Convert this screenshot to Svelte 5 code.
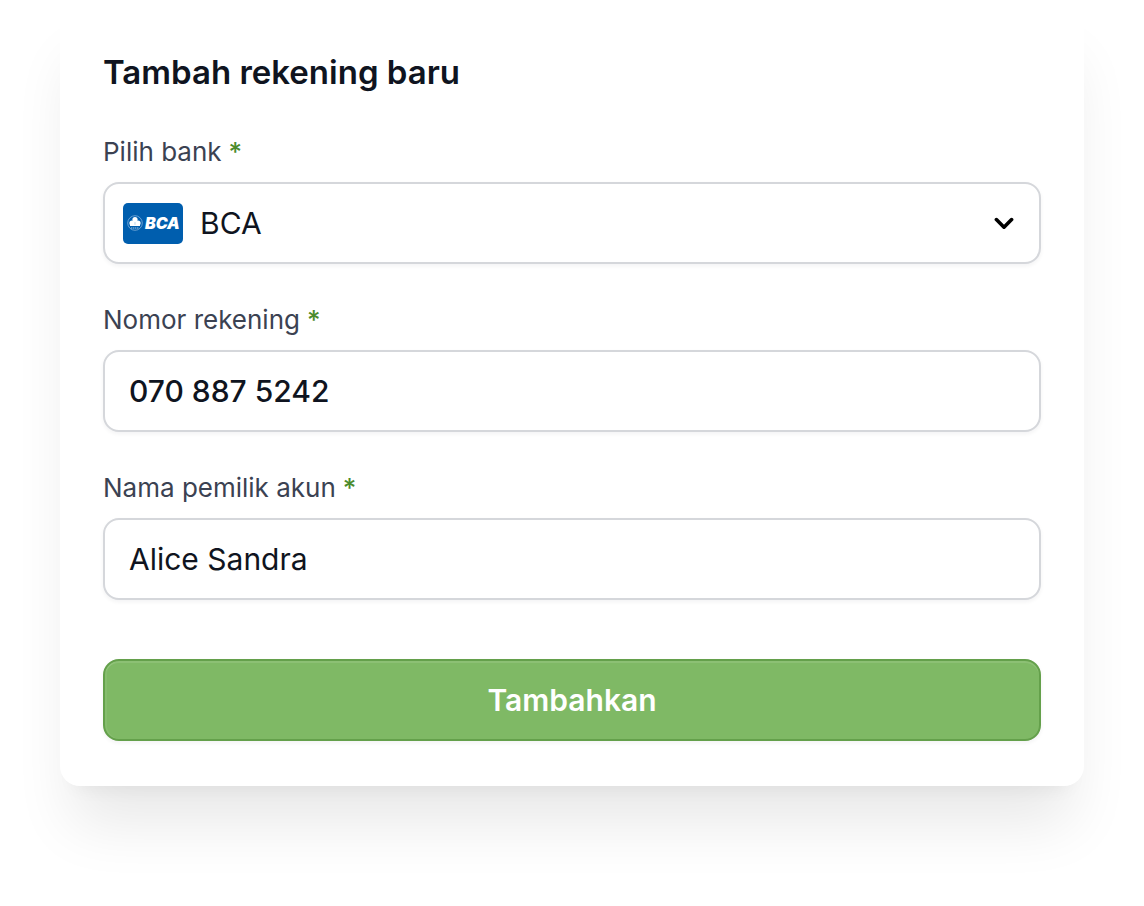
<script lang="ts">
	const banks = ['BCA', 'BNI', 'BRI', 'Mandiri'];

	let bank = $state('BCA');
	let accountNumber = $state('070 887 5242');
	let accountName = $state('Alice Sandra');

	function handleSubmit(event: SubmitEvent) {
		event.preventDefault();
	}
</script>

<main class="page">
	<form class="card" onsubmit={handleSubmit}>
		<h1 class="title">Tambah rekening baru</h1>

		<div class="field">
			<label class="label" for="bank">Pilih bank<span class="required">*</span></label>
			<div class="select-wrap">
				<select id="bank" class="control select" bind:value={bank} required>
					{#each banks as name}
						<option value={name}>{name}</option>
					{/each}
				</select>
				<svg class="bank-logo" width="60" height="42" viewBox="0 0 60 42" aria-hidden="true">
					<rect y="1" width="60" height="41" rx="5" fill="#005eae" />
					<circle cx="12" cy="21" r="7.3" fill="none" stroke="#7fb0dc" stroke-width="0.8" />
					<g fill="#fff">
						<circle cx="12" cy="17.6" r="2.6" />
						<circle cx="9" cy="21" r="2.6" />
						<circle cx="15" cy="21" r="2.6" />
						<path d="M11.3 19h1.4v3.4h4.3v1.5H7v-1.5h4.3z" />
					</g>
					<path d="M8 26h8" stroke="#a9cbe8" stroke-width="1" stroke-dasharray="1.4 0.6" />
					<text x="22" y="27" class="logo-text">BCA</text>
				</svg>
				<svg
					class="chevron"
					width="20"
					height="14"
					viewBox="0 0 20 14"
					fill="none"
					stroke="#000"
					stroke-width="3.6"
					stroke-linecap="round"
					stroke-linejoin="round"
					aria-hidden="true"
				>
					<path d="M2.4 3.6l7.6 7.6 7.6-7.6" />
				</svg>
			</div>
		</div>

		<div class="field">
			<label class="label" for="account-number">
				Nomor rekening<span class="required">*</span>
			</label>
			<input
				id="account-number"
				class="control number"
				type="text"
				inputmode="numeric"
				bind:value={accountNumber}
				required
			/>
		</div>

		<div class="field">
			<label class="label" for="account-name">
				Nama pemilik akun<span class="required">*</span>
			</label>
			<input id="account-name" class="control" type="text" bind:value={accountName} required />
		</div>

		<button class="submit" type="submit">Tambahkan</button>
	</form>
</main>

<style>
	:global(body) {
		background: #fff;
	}
	.page {
		padding: 0 60px 120px;
		font-family: Inter, 'Liberation Sans', sans-serif;
		color: #0f1420;
		overflow: hidden;
	}
	.card {
		display: flex;
		flex-direction: column;
		gap: 38px;
		padding: 52px 43px 45px;
		border-radius: 20px;
		background: #fff;
		box-shadow:
			0 50px 60px -12px rgba(0, 0, 0, 0.09),
			0 16px 20px -16px rgba(0, 0, 0, 0.07);
	}
	.title {
		margin: 0 0 4px;
		font-size: 33px;
		font-weight: 600;
		line-height: 40px;
	}
	.field {
		display: flex;
		flex-direction: column;
		gap: 12px;
	}
	.label {
		font-size: 26px;
		line-height: 36px;
		color: #3b4252;
	}
	.required {
		margin-left: 7px;
		font-weight: 500;
		color: #4b8b2c;
	}
	.control {
		box-sizing: border-box;
		width: 100%;
		height: 82px;
		margin: 0;
		padding: 0 24px;
		border: 2px solid #d5d7db;
		border-radius: 16px;
		background: #fff;
		box-shadow: 0 2px 4px rgba(16, 24, 40, 0.05);
		font-family: inherit;
		font-size: 30px;
		color: inherit;
	}
	.number {
		font-weight: 500;
	}
	.control:focus-visible {
		outline: 2px solid #7fb965;
	}
	.select-wrap {
		position: relative;
		display: flex;
	}
	.select {
		appearance: none;
		padding: 0 64px 0 95px;
		cursor: pointer;
	}
	.bank-logo,
	.chevron {
		position: absolute;
		top: 0;
		bottom: 0;
		margin: auto 0;
		pointer-events: none;
	}
	.bank-logo {
		left: 20px;
	}
	.chevron {
		right: 27px;
	}
	.logo-text {
		font-family: Inter, 'Liberation Sans', sans-serif;
		font-size: 16px;
		font-weight: 900;
		font-style: italic;
		fill: #fff;
	}
	.submit {
		height: 82px;
		margin-top: 21px;
		padding: 0 24px;
		border: 2px solid #64a04b;
		border-radius: 16px;
		background: #7fb965;
		box-shadow:
			inset 0 2px 0 rgba(255, 255, 255, 0.1),
			inset 2px 0 0 rgba(255, 255, 255, 0.06),
			0 2px 4px rgba(16, 24, 40, 0.05);
		font-family: inherit;
		font-size: 30px;
		font-weight: 600;
		color: #fff;
		cursor: pointer;
	}
	.submit:hover {
		background: #74ad5b;
	}
</style>
